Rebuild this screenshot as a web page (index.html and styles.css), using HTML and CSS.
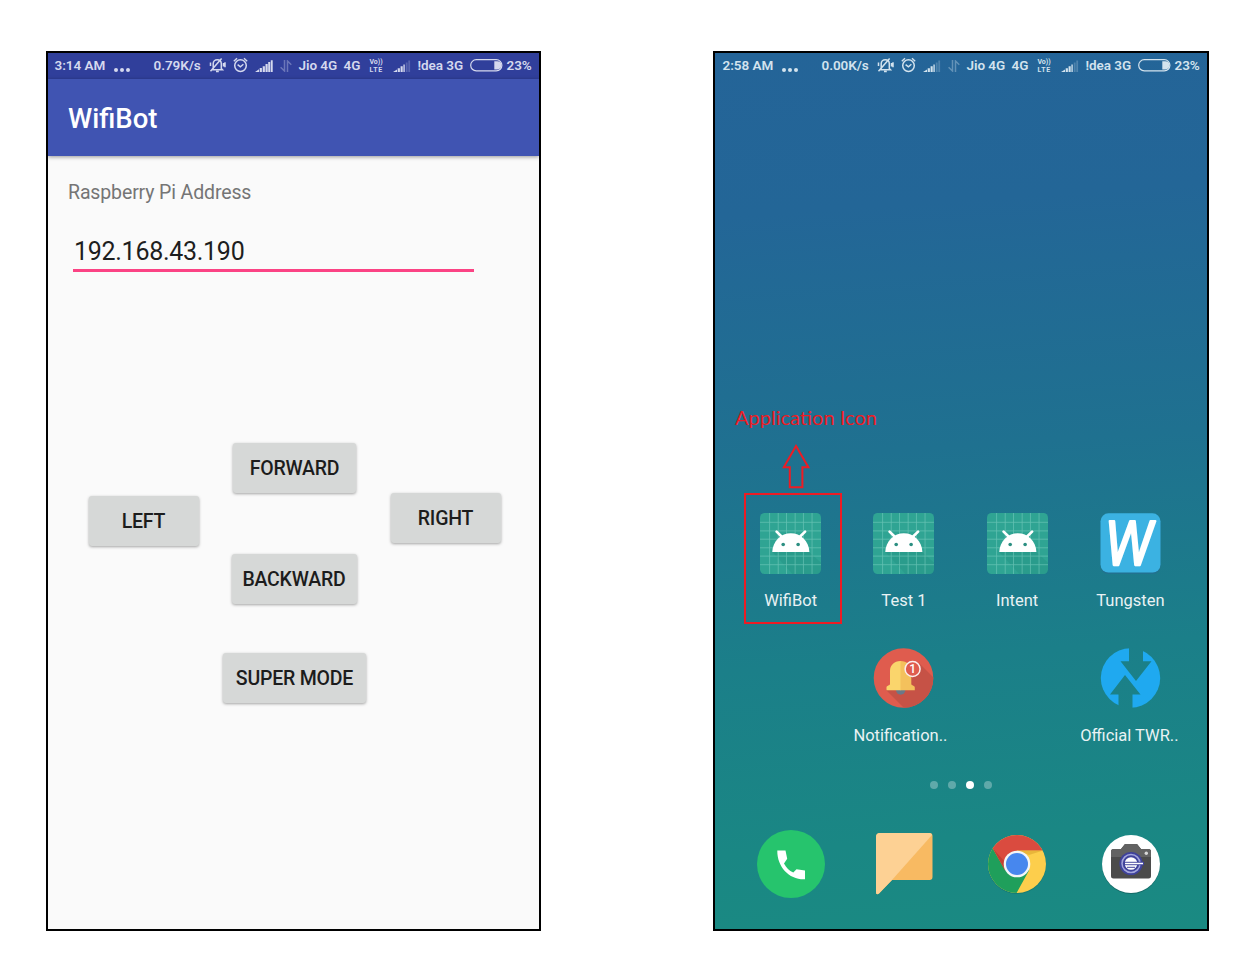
FILE: index.html
```html
<!DOCTYPE html>
<html lang="en">
<head>
<meta charset="utf-8">
<title>WifiBot</title>
<link rel="stylesheet" href="styles.css">
</head>
<body>
<svg class="defs" width="0" height="0" aria-hidden="true">
  <defs>
    <symbol id="bell-off" viewBox="0 0 17 16">
      <path d="M4.200 11.500V6.800C4.200 4.400 6 2.700 8.300 2.700s4 1.700 4 4.100v4.700l1.200 1.300H3z M7 14.400h2.800 M14.500 6v3.500 M16 5.300v5 M1.500 5.600v3.500 M1.500 14.300 12.600 1.600" fill="none" stroke="currentColor" stroke-width="1.500"/>
    </symbol>
    <symbol id="alarm" viewBox="0 0 15 16">
      <circle cx="7.500" cy="8.600" r="5.800" fill="none" stroke="currentColor" stroke-width="1.500"/>
      <path d="M.8 4.200 4 1.200M14.200 4.200 11 1.200M4.600 7.600l2.800 2.300 3-2.600" fill="none" stroke="currentColor" stroke-width="1.400"/>
    </symbol>
    <symbol id="signal-full" viewBox="0 0 18 12">
      <path d="M0 12 4 9.300V12zM4.700 8h2.200v4H4.700zM7.700 6.300h2.200V12H7.700zM10.500 4h2.200v8h-2.200zM13.200 2h2v10h-2zM15.800.3h1.900V12h-1.900z" fill="currentColor"/>
    </symbol>
    <symbol id="signal-low" viewBox="0 0 18 12">
      <path d="M0 12 4 9.500V12zM4.700 8.200h2.200V12H4.700zM7.600 6.300h2.100V12H7.600z" fill="currentColor"/>
      <path d="M10.200 4.600h1.800V12h-1.800z" fill="currentColor" opacity=".75"/>
      <path d="M12.800 2.500h1.800V12h-1.800zM15.300.5h1.800V12h-1.800z" fill="currentColor" opacity=".25"/>
    </symbol>
    <symbol id="data-arrows" viewBox="0 0 12 12">
      <path d="M4.500 0v11L.6 7.300M7.500 12V1l3.800 3.700" fill="none" stroke="currentColor" stroke-width="1.500" opacity=".36"/>
    </symbol>
    <symbol id="battery" viewBox="0 0 33 13">
      <rect x=".7" y=".7" width="31.200" height="11.200" rx="5.600" fill="none" stroke="currentColor" stroke-width="1.200"/>
      <path d="M24.300 2.200h3a4.100 4.100 0 0 1 0 8.200h-3z" fill="currentColor"/>
    </symbol>
    <symbol id="android" viewBox="0 0 184 184">
      <rect width="184" height="184" rx="14" fill="#2fa493"/>
      <path d="M37 118 98 184H170Q184 184 184 170V150L149 118z" fill="#1c8576" opacity=".25"/>
      <path d="M29 0V184M55 0V184M80 0V184M106 0V184M131 0V184M157 0V184M0 28H184M0 54H184M0 79H184M0 105H184M0 130H184M0 156H184" stroke="#7ed0c3" stroke-width="2.400" opacity=".65"/>
      <path d="M37 118C38 84 64 61 93 61s55 23 56 57z" fill="#fff"/>
      <path d="M50 56 65 71M136 56 121 71" stroke="#fff" stroke-width="8" stroke-linecap="round"/>
      <circle cx="70" cy="95" r="5.500" fill="#2c8f82"/><circle cx="115" cy="95" r="5.500" fill="#2c8f82"/>
    </symbol>
  </defs>
</svg>

<main class="board">
  <section class="phone phone-app">
    <div class="status">
      <span>3:14 AM</span><span class="more"><i></i><i></i><i></i></span><span>0.79K/s</span>
      <svg class="i-bell"><use href="#bell-off"/></svg>
      <svg class="i-alarm"><use href="#alarm"/></svg>
      <svg class="i-signal"><use href="#signal-full"/></svg>
      <svg class="i-data"><use href="#data-arrows"/></svg>
      <span>Jio 4G</span><span>4G</span>
      <span class="volte"><b>Vo))</b><b class="lte">LTE</b></span>
      <svg class="i-signal"><use href="#signal-low"/></svg>
      <span>!dea 3G</span>
      <svg class="i-battery"><use href="#battery"/></svg>
      <span>23%</span>
    </div>
    <header class="toolbar">WifiBot</header>
    <div class="form">
      <label class="caption">Raspberry Pi Address</label>
      <div class="field">192.168.43.190</div>
    </div>
    <div class="pad">
      <button class="btn btn-left">LEFT</button>
      <div class="pad-mid">
        <button class="btn btn-forward">FORWARD</button>
        <button class="btn btn-backward">BACKWARD</button>
        <button class="btn btn-super">SUPER MODE</button>
      </div>
      <button class="btn btn-right">RIGHT</button>
    </div>
  </section>

  <section class="phone phone-home">
    <div class="status">
      <span>2:58 AM</span><span class="more"><i></i><i></i><i></i></span><span>0.00K/s</span>
      <svg class="i-bell"><use href="#bell-off"/></svg>
      <svg class="i-alarm"><use href="#alarm"/></svg>
      <svg class="i-signal"><use href="#signal-low"/></svg>
      <svg class="i-data"><use href="#data-arrows"/></svg>
      <span>Jio 4G</span><span>4G</span>
      <span class="volte"><b>Vo))</b><b class="lte">LTE</b></span>
      <svg class="i-signal"><use href="#signal-low"/></svg>
      <span>!dea 3G</span>
      <svg class="i-battery"><use href="#battery"/></svg>
      <span>23%</span>
    </div>

    <div class="apps">
      <div class="app"><svg class="icon"><use href="#android"/></svg><span>WifiBot</span></div>
      <div class="app"><svg class="icon"><use href="#android"/></svg><span>Test 1</span></div>
      <div class="app"><svg class="icon"><use href="#android"/></svg><span>Intent</span></div>
      <div class="app">
        <svg class="icon" viewBox="0 0 61 61">
          <rect x=".5" y="1.500" width="60" height="59.500" rx="8" fill="#22718f"/>
          <rect x=".5" y=".3" width="60" height="59.200" rx="8" fill="#3bb2e2"/>
          <text class="w-mark" transform="translate(6 52) skewX(3) scale(.95 1.060)">W</text>
        </svg>
        <span>Tungsten</span>
      </div>
      <div class="app app-notification">
        <svg class="icon" viewBox="0 0 61 61">
          <clipPath id="disc"><circle cx="30.500" cy="30" r="29.800"/></clipPath>
          <g clip-path="url(#disc)">
            <rect width="61" height="61" fill="#df5c4e"/>
            <path d="M13 42 32 61H61V30L46 15z" fill="#c65246"/>
          </g>
          <path d="M23 42a4.600 4.600 0 0 0 9.400 0z" fill="#6b7888"/>
          <path d="M27.500 13C21 13 17 17.500 17 23v13c0 1.500-3.500 1.500-3.500 3.500V42.300H28V13z" fill="#fad56c"/>
          <path d="M27.500 13C34 13 38.300 17.500 38.300 23v13c0 1.500 3.500 1.500 3.500 3.500V42.300H27.500z" fill="#f4c15c"/>
          <circle cx="39.600" cy="21" r="7.500" fill="#df5c4e" stroke="#fbeeee" stroke-width="1.500"/>
          <text class="badge-mark" x="39.600" y="25.200">1</text>
        </svg>
        <span>Notification..</span>
      </div>
      <div class="app app-twrp">
        <svg class="icon" viewBox="0 0 61 61">
          <clipPath id="disc2"><circle cx="30.500" cy="30" r="29.700"/></clipPath>
          <g clip-path="url(#disc2)">
            <path fill="#1fa9f0" d="M0 0H29V13.300H20.500L36 33 51.500 13.300H43V0H61V61H32.500V46.500H40.500L25 27 10 46.500H18.500V61H0z"/>
          </g>
        </svg>
        <span>Official TWR..</span>
      </div>
    </div>

    <div class="pages"><i></i><i></i><i class="current"></i><i></i></div>

    <div class="dock">
      <svg class="dock-phone" viewBox="0 0 68 68">
        <circle cx="34" cy="34" r="34" fill="#26c46d"/>
        <path d="M20.300 20.500h8.200l1.700 8.200-3.200 4.800c2.500 4.500 5 7 9.300 9l3.200-3.300 8.500 1.300v8.800C32.500 50 20 37 20.300 20.500z" fill="#fff"/>
      </svg>
      <svg class="dock-chat" viewBox="0 0 57 62">
        <path d="M4 0H53.500Q56.500 0 56.500 3V44Q56.500 47 53.500 47H16L3 60.500Q0 62.500 0 59V4Q0 0 4 0z" fill="#f8ba62"/>
        <path d="M4 0H53.500Q55.500 0 56 2L16 47 3 60.500Q0 62.500 0 59V4Q0 0 4 0z" fill="#fdd194"/>
      </svg>
      <svg class="dock-chrome" viewBox="0 0 60 60">
        <circle cx="30" cy="31" r="29" fill="#14716b" opacity=".6"/>
        <clipPath id="disc3"><circle cx="30" cy="30" r="29"/></clipPath>
        <g clip-path="url(#disc3)">
          <rect width="60" height="60" fill="#fdce4c"/>
          <path d="M5.500 14 0 10V60H29L42 36.500 30 30 18 36z" fill="#1f9f5b"/>
          <path d="M5.500 14 0 0H60V16.500H30L18 36z" fill="#da4b3f"/>
          <path d="M5.500 14 18 37V28z" fill="#a83529" opacity=".5"/>
          <path d="M30 16.500H56L42 21z" fill="#dca52e" opacity=".6"/>
        </g>
        <circle cx="30" cy="30" r="13.300" fill="#f3f5f7"/><circle cx="30" cy="30" r="11" fill="#4787ee"/>
      </svg>
      <svg class="dock-camera" viewBox="0 0 60 60">
        <circle cx="30" cy="31" r="29" fill="#14605c" opacity=".7"/>
        <circle cx="30" cy="30" r="29" fill="#fff"/>
        <path d="M12.500 15H20l4-5H36l4 5h7.500Q50 15 50 17.500V42Q50 44.500 47.500 44.500H12.500Q10 44.500 10 42V17.500Q10 15 12.500 15z" fill="#4b4b4b"/>
        <path d="M12.500 15H20l4-5H36l4 5h7.500Q50 15 50 17.500V23H10V17.500Q10 15 12.500 15z" fill="#626262"/>
        <circle cx="45.300" cy="19.300" r="1.700" fill="#d8d8d8"/>
        <circle cx="30" cy="29.500" r="11.600" fill="#3f429b"/>
        <circle cx="30" cy="29.500" r="9" fill="none" stroke="#a3a6dc" stroke-width="1.500"/>
        <circle cx="30" cy="29.500" r="6.300" fill="#fff"/>
        <path d="M23 27.800H43V31.200H23z" fill="#3f429b"/>
        <path d="M24 29.500H42" stroke="#fff" stroke-width="1.500"/>
        <path d="M26 33.300H34" stroke="#3f429b" stroke-width="1"/>
      </svg>
    </div>

    <div class="callout">
      <span class="callout-text">Application Icon</span>
      <svg class="callout-arrow" viewBox="0 0 28 45"><path d="M14 2 1.800 23.200H7.800V43.200H20.400V23.200H26.400z" fill="none" stroke="#ed1c24" stroke-width="2"/></svg>
      <div class="callout-box"></div>
    </div>
  </section>
</main>
</body>
</html>
```
FILE: styles.css
```css
* { box-sizing: border-box; }

body {
  margin: 0;
  background: #fff;
  font-family: Roboto, "Noto Sans", sans-serif;
}

.defs { display: block; }

.board {
  display: grid;
  grid-template-columns: 495px 496px;
  column-gap: 172px;
  padding: 51px 0 0 46px;
}

.phone {
  position: relative;
  display: flex;
  flex-direction: column;
  height: 880px;
  border: 2px solid #000;
  overflow: hidden;
}

.phone-app { background: #fafafa; }

.phone-home {
  background: linear-gradient(176deg, #246498 0%, #236697 18%, #1f7190 45%, #1b7f89 68%, #1a8784 88%, #1a8a82 100%);
}

/* Status bar */
.status {
  display: grid;
  grid-template-columns: 59px 40px 55px 24px 22px 25px 19px 45px 26px 23px 25px 52px 37px auto;
  align-items: center;
  flex: none;
  height: 26px;
  padding: 0 0 1px 6.500px;
  color: #d5d9ee;
  font-size: 13.500px;
  font-weight: 600;
  letter-spacing: -.05px;
  line-height: 25px;
  white-space: nowrap;
}

.phone-app .status { background: #303f9b; }
.phone-home .status { padding-left: 7.500px; color: #d3e3ee; }

.more {
  display: flex;
  gap: 2px;
  padding-top: 8px;
}

.more i {
  width: 4px;
  height: 4px;
  border-radius: 50%;
  background: currentColor;
}

.i-bell { width: 17px; height: 16px; margin-top: -1px; }
.i-alarm { width: 15px; height: 16px; margin-top: -1px; }
.i-signal { width: 18px; height: 12px; margin-top: 1px; }
.i-data { width: 12px; height: 12px; }
.i-battery { width: 33px; height: 13px; }

.volte {
  display: flex;
  flex-direction: column;
  font-size: 7px;
  line-height: 8px;
}

.volte b { font-weight: 700; }
.volte .lte { letter-spacing: .7px; }

/* WifiBot screen */
.toolbar {
  flex: none;
  height: 77px;
  padding-left: 20px;
  background: #4054b2;
  box-shadow: 0 1px 4px rgba(0, 0, 0, .4);
  color: #fff;
  font-size: 27.500px;
  font-weight: 500;
  line-height: 79px;
}

.form {
  display: flex;
  flex-direction: column;
  padding: 24px 0 0 20px;
}

.caption {
  color: #757575;
  font-size: 19.500px;
  letter-spacing: -.13px;
  line-height: 25px;
}

.field {
  width: 401px;
  height: 67px;
  margin-left: 5px;
  padding-left: 1px;
  border-bottom: 3px solid #fb4384;
  color: #1e1e1e;
  font-size: 25px;
  letter-spacing: -.28px;
  line-height: 94px;
}

.pad {
  display: flex;
  align-items: flex-start;
  gap: 24.500px;
  padding: 171px 0 0 40.500px;
}

.pad-mid {
  display: flex;
  flex-direction: column;
  align-items: center;
  width: 143px;
}

.btn {
  flex: none;
  height: 50px;
  padding: 2px 0 0;
  border: 0;
  border-radius: 3px;
  background: #d6d8d7;
  box-shadow: 0 1px 3px rgba(0, 0, 0, .35);
  color: #1c1c1c;
  font-family: inherit;
  font-size: 19.500px;
  font-weight: 500;
  letter-spacing: -.2px;
  line-height: 48px;
}

.btn-left { width: 110px; margin-top: 53.400px; }
.btn-right { width: 110px; margin-top: 50.400px; }
.btn-forward { width: 123px; }
.btn-backward { width: 125px; margin: 61px 1px 49px 0; }
.btn-super { width: 143px; }

/* Launcher screen */
.apps {
  display: grid;
  grid-template-columns: repeat(4, 1fr);
  grid-auto-rows: 134.500px;
  padding: 434px 20px 0 19px;
}

.app {
  display: flex;
  flex-direction: column;
  align-items: center;
  gap: 15px;
  color: #e9f2f4;
  font-size: 16.500px;
  line-height: 24px;
  white-space: nowrap;
}

.icon { flex: none; width: 61px; height: 61px; overflow: visible; }
.app-notification { grid-column: 2; }
.app-notification span { margin-right: 7px; }
.app-twrp { grid-column: 4; }
.app-twrp span { margin-right: 2px; }

.w-mark {
  fill: #fff;
  stroke: #fff;
  stroke-width: 2.200px;
  stroke-linejoin: round;
  font: italic 500 58px "Open Sans", sans-serif;
}

.badge-mark {
  fill: #fff;
  font: 500 12px Roboto, sans-serif;
  text-anchor: middle;
}

.pages {
  display: flex;
  gap: 10.300px;
  margin-top: -1px;
  padding-left: 214.500px;
}

.pages i {
  width: 8px;
  height: 8px;
  border-radius: 50%;
  background: rgba(255, 255, 255, .3);
}

.pages .current { background: #fff; }

.dock {
  display: grid;
  grid-template-columns: repeat(4, 1fr);
  place-items: center;
  height: 68px;
  margin-top: 41px;
  padding: 0 20px 0 19px;
}

.dock-phone { width: 68px; height: 68px; }
.dock-chat { width: 57px; height: 62px; margin-left: 1px; }
.dock-chrome { width: 60px; height: 60px; }
.dock-camera { width: 60px; height: 60px; margin-left: 1px; }

/* Annotation drawn over the launcher */
.callout {
  position: absolute;
  top: 352px;
  left: 20px;
  color: #ed1c24;
}

.callout-text {
  display: block;
  font: 20px/24px Lato, sans-serif;
  white-space: nowrap;
}

.callout-arrow {
  display: block;
  width: 28px;
  height: 45px;
  margin: 15px 0 4px 47px;
}

.callout-box {
  width: 98px;
  height: 131px;
  margin-left: 9px;
  border: 2px solid #ed1c24;
}
```
